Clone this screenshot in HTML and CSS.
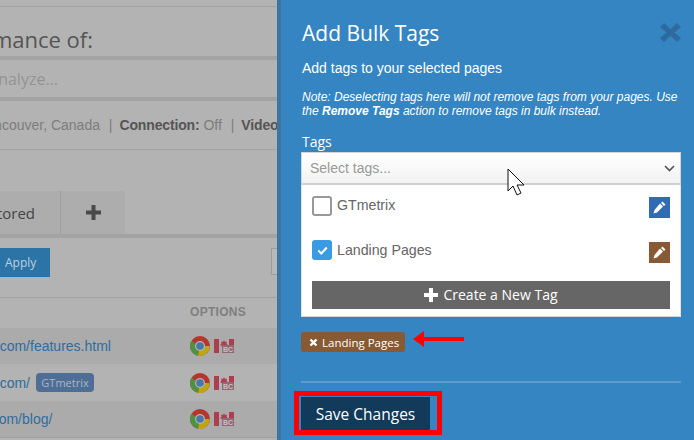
FILE: index.html
```html
<!DOCTYPE html>
<html lang="en">
<head>
<meta charset="utf-8">
<title>Add Bulk Tags</title>
<link rel="stylesheet" href="styles.css">
</head>
<body>
<div class="page">
  <main class="under">
    <div class="rule-top"></div>
    <h2 class="perf">Analyze the performance of:</h2>
    <div class="url-input"><span>Enter URL to Analyze...</span></div>
    <p class="info">Test Server: Vancouver, Canada <i>|</i><b>Connection:</b> Off <i>|</i><b class="video">Video:</b></p>
    <div class="tabs">
      <div class="tab tab-name"><span>Monitored</span></div>
      <div class="tab tab-plus"><svg width="15" height="15" viewBox="0 0 15 15"><path d="M5.500 0h4v5.500H15v4H9.500V15h-4V9.500H0v-4h5.500z"/></svg></div>
    </div>
    <div class="toolbar">
      <button class="apply">Apply</button>
      <div class="mini-input"></div>
    </div>
    <div class="thead"><span>OPTIONS</span></div>
    <div class="row alt">
      <a class="link">gtmetrix.com/features.html</a>
      <div class="opts">
        <svg class="chrome" viewBox="0 0 20 20"><use href="#chrome"/></svg>
        <svg class="flag" viewBox="0 0 20 14"><use href="#flag"/></svg>
      </div>
    </div>
    <div class="row">
      <a class="link">gtmetrix.com/</a><span class="pill">GTmetrix</span>
      <div class="opts">
        <svg class="chrome" viewBox="0 0 20 20"><use href="#chrome"/></svg>
        <svg class="flag" viewBox="0 0 20 14"><use href="#flag"/></svg>
      </div>
    </div>
    <div class="row alt last">
      <a class="link link-shift">gtmetrix.com/blog/</a>
      <div class="opts">
        <svg class="chrome" viewBox="0 0 20 20"><use href="#chrome"/></svg>
        <svg class="flag" viewBox="0 0 20 14"><use href="#flag"/></svg>
      </div>
    </div>
  </main>

  <aside class="panel">
    <header class="panel-head">
      <h1>Add Bulk Tags</h1>
      <svg class="close" width="21" height="19" viewBox="0 0 21 19"><path d="M4 0l6.500 6L17 0l4 4-6.500 5.500L21 15l-4 4-6.500-6L4 19l-4-4 6.500-5.500L0 4z"/></svg>
    </header>
    <p class="lead">Add tags to your selected pages</p>
    <p class="note">Note: Deselecting tags here will not remove tags from your pages. Use the <b>Remove Tags</b> action to remove tags in bulk instead.</p>
    <label class="tags-label">Tags</label>
    <div class="select">
      <span>Select tags...</span>
      <svg width="11" height="7" viewBox="0 0 11 7"><path d="M1 1l4.500 4.500L10 1" fill="none" stroke="#555" stroke-width="1.700"/></svg>
    </div>
    <div class="dropdown">
      <div class="opt">
        <span class="check"></span><span class="opt-name">GTmetrix</span>
        <button class="edit edit-blue"><svg width="13" height="13" viewBox="0 0 13 13"><use href="#pencil"/></svg></button>
      </div>
      <div class="opt opt-two">
        <span class="check on"><svg width="11" height="9" viewBox="0 0 11 9"><path d="M1.300 4.500l3 3 5.500-6" fill="none" stroke="#fff" stroke-width="2"/></svg></span><span class="opt-name">Landing Pages</span>
        <button class="edit edit-brown"><svg width="13" height="13" viewBox="0 0 13 13"><use href="#pencil"/></svg></button>
      </div>
      <button class="create"><svg width="14" height="14" viewBox="0 0 14 14"><path d="M5 0h4v5h5v4H9v5H5V9H0V5h5z"/></svg><span>Create a New Tag</span></button>
    </div>
    <div class="chip-row">
      <span class="chip"><svg width="9" height="9" viewBox="0 0 9 9"><path d="M1.500 1.500l6 6M7.500 1.500l-6 6" stroke="#fff" stroke-width="2.400"/></svg>Landing Pages</span>
    </div>
    <div class="divider"></div>
    <button class="save">Save Changes</button>

    <svg class="mark-arrow" width="51" height="16" viewBox="0 0 51 16"><path d="M0 8L11 0v6h40v4H11v6z" fill="#f00"/></svg>
    <div class="mark-box"></div>
  </aside>

  <svg class="cursor" width="20" height="28" viewBox="0 0 20 28"><path d="M1 1v22l5-5 4 9 4-2-4-8h7z" fill="#fff" stroke="#111" stroke-width="1"/></svg>
</div>

<svg class="defs" width="0" height="0">
  <defs>
    <g id="chrome">
      <circle cx="10" cy="10" r="10" fill="#b5362d"/>
      <path d="M10 10L1.300 5A10 10 0 0 0 8 19.800z" fill="#4e9140"/>
      <path d="M10 10h9.800A10 10 0 0 1 8 19.800z" fill="#bfa512"/>
      <circle cx="10" cy="10" r="5" fill="#b5b5b5"/>
      <circle cx="10" cy="10" r="3.800" fill="#4878a8"/>
    </g>
    <g id="flag">
      <rect width="5" height="14" fill="#ad3e4e"/>
      <rect x="15" width="5" height="14" fill="#ad3e4e"/>
      <path d="M10 1l1 2 2-.5-.5 2.500 1.500 1-4 2.500-4-2.500 1.500-1L7 2.500 9 3z" fill="#ad3e4e"/>
      <rect x="8" y="6" width="12" height="8" fill="#8f6a76"/>
      <text x="14" y="13" text-anchor="middle" class="bc">BC</text>
    </g>
    <g id="pencil">
      <path d="M9.500.5l3 3-1.500 1.500-3-3zM7 2.500l3 3L4 11.500l-3.500 1 1-3.500z" fill="currentColor"/>
    </g>
  </defs>
</svg>
</body>
</html>
```
FILE: styles.css
```css
* { box-sizing: border-box; }
html, body { margin: 0; padding: 0; }
body { font-family: "Liberation Sans", Arial, sans-serif; background: #b3b3b3; }
.page { position: relative; display: flex; width: 694px; height: 440px; overflow: hidden; }
.defs { position: absolute; }
.bc { font: bold 7px "Liberation Sans", sans-serif; fill: #c9c0c4; }

/* Dimmed page under the panel */
.under { flex: 0 0 277px; width: 277px; height: 440px; overflow: hidden; background: #b3b3b3; color: #595959; display: flex; flex-direction: column; }
.rule-top { height: 1px; margin-top: 6px; background: #a3a3a3; flex: none; }
.perf { display: flex; justify-content: flex-end; margin: 19px 0 0; height: 26px; padding-right: 184px; font: 400 22px/26px "Open Sans", sans-serif; color: #555; white-space: nowrap; flex: none; }
.url-input { display: flex; justify-content: flex-end; flex: none; height: 45px; margin-top: 4px; border-top: 4px solid #a3a3a3; border-bottom: 4px solid #a3a3a3; padding-right: 219px; font: 16px/38px "Open Sans", sans-serif; color: #949494; white-space: nowrap; }
.info { display: flex; justify-content: flex-end; margin: 0; flex: none; height: 49px; border-bottom: 1px solid #a3a3a3; padding: 16px 0 0; font-size: 14px; line-height: 16px; color: #7d7d7d; white-space: pre; }
.info b { color: #555; letter-spacing: -.15px; }
.info i { font-style: normal; margin: 0 7px 0 5px; }
.info .video { margin-right: -6px; }
.tabs { display: flex; flex: none; height: 47px; margin-top: 41px; border-bottom: 4px solid #a3a3a3; }
.tab { background: #adadad; display: flex; align-items: center; }
.tab-name { width: 61px; justify-content: flex-end; border-right: 1px solid #9f9f9f; padding-right: 25px; white-space: nowrap; font: 15px "Open Sans", sans-serif; color: #444; }
.tab-plus { width: 64px; justify-content: center; }
.tab-plus svg { fill: #4a4a4a; }
.toolbar { display: flex; align-items: flex-start; justify-content: space-between; flex: none; height: 60px; padding-top: 10px; border-bottom: 1px solid #a3a3a3; }
.apply { width: 50px; height: 29px; padding: 0 0 1px 5px; border: 0; background: #2c74a6; color: #bcd0de; font: 12px "Open Sans", sans-serif; text-align: left; }
.mini-input { width: 6px; height: 27px; background: #b8b8b8; border: 1px solid #9d9d9d; border-right: 0; }
.thead { display: flex; flex: none; height: 30px; padding: 7px 0 0 190px; font-size: 12px; line-height: 15px; font-weight: 700; letter-spacing: .3px; color: #7f7f7f; white-space: nowrap; }
.row { position: relative; display: flex; align-items: center; flex: none; height: 37px; font-size: 14px; color: #2f6d9f; white-space: nowrap; }
.row.alt { background: #ababab; height: 36px; }
.row.last { border-bottom: 1px solid #9f9f9f; height: 37px; }
.link { display: block; flex: none; margin-left: -54px; color: #2f6d9f; }
.link-shift { margin-left: -62px; }
.pill { background: #4f6e95; color: #a9b6c6; font: 11px/19px "Open Sans", sans-serif; width: 58px; height: 19px; text-align: center; border-radius: 4px; margin-left: 6px; }
.opts { display: flex; align-items: center; gap: 4px; position: absolute; left: 190px; top: 50%; margin-top: -10px; }
.chrome { width: 20px; height: 20px; display: block; }
.flag { width: 20px; height: 14px; display: block; }

/* Panel */
.panel { position: relative; flex: 1; height: 440px; background: #3585c3; border-left: 4px solid #3e74a0; padding: 0 13px 0 20px; color: #fff; }
.panel-head { display: flex; justify-content: space-between; padding-top: 18px; height: 49px; }
.panel-head h1 { margin: 0 0 0 1px; font: 400 21px/30px "Open Sans", sans-serif; color: #fff; }
.close { margin-top: 5px; fill: #2f6a9c; }
.lead { margin: 10px 0 0 1px; font-size: 14px; line-height: 18px; }
.note { margin: 13px 0 0 1px; font-size: 12px; line-height: 14px; font-style: italic; }
.tags-label { display: block; margin-top: 14px; margin-left: 1px; font: 14px/20px "Open Sans", sans-serif; }
.select { display: flex; align-items: center; justify-content: space-between; height: 33px; padding: 0 5px 0 8px; background: linear-gradient(#fff, #f2f2f2); border: 1px solid #d5d5d5; border-bottom: 2px solid #d0d0d0; color: #999; font-size: 14px; }
.dropdown { background: #fff; height: 132px; padding: 11px 10px 0; border: 1px solid #e4e4e4; border-top: 0; border-bottom: 1px solid #d5d5d5; }
.opt { display: flex; align-items: flex-start; height: 44px; color: #666; font-size: 14px; }
.opt-two { height: 41px; }
.check { flex: none; width: 20px; height: 20px; border: 2px solid #999; border-radius: 3px; background: #fff; display: flex; align-items: center; justify-content: center; }
.check.on { background: #3a9ae2; border: 0; }
.opt-name { margin-left: 5px; line-height: 18px; font-size: 14.200px; }
.opt-two .opt-name { margin-top: 1px; }
.edit { margin-left: auto; width: 21px; height: 21px; margin-top: 1px; border: 0; padding: 0; display: flex; align-items: center; justify-content: center; color: #fff; }
.opt-two .edit { margin-top: 2px; }
.edit-blue { background: #316cb3; }
.edit-brown { background: #875a33; }
.create { display: flex; align-items: center; justify-content: center; gap: 5px; width: 100%; height: 28px; border: 0; padding: 0 0 1px; background: #666; color: #fff; font: 14px "Open Sans", sans-serif; }
.create svg { fill: #fff; }
.chip-row { display: flex; margin-top: 15px; height: 49px; }
.chip { display: flex; align-items: center; gap: 4px; height: 20px; padding: 0 6px 0 8px; background: #875a33; border-radius: 3px; font: 11.500px "Open Sans", sans-serif; color: #fff; }
.divider { height: 2px; background: #5d9bd0; }
.save { display: block; margin-top: 14px; width: 129px; height: 33px; border: 0; padding: 0; background: #123a5a; color: #fff; font: 15.500px "Open Sans", sans-serif; }
.mark-arrow { position: absolute; left: 132px; top: 331px; }
.mark-box { position: absolute; left: 13px; top: 391px; width: 148px; height: 44px; border: 5px solid #f00; }
.cursor { position: absolute; left: 507px; top: 168px; }
```
